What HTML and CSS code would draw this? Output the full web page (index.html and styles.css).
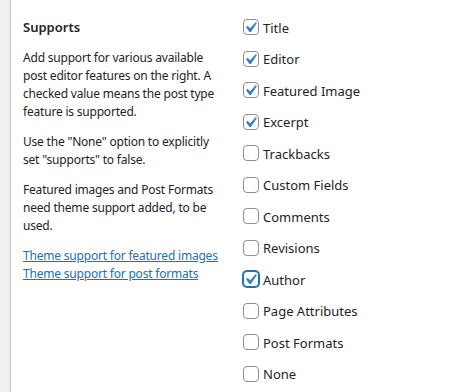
FILE: index.html
```html
<!DOCTYPE html>
<html>
<head>
<meta charset="utf-8">
<link rel="stylesheet" href="styles.css">
</head>
<body>
<div class="page">
  <div class="panel">
    <div class="info">
      <h3 class="title">Supports</h3>
      <p class="desc">Add support for various available post editor features on the right. A checked value means the post type feature is supported.</p>
      <p class="desc">Use the "None" option to explicitly set "supports" to false.</p>
      <p class="desc">Featured images and Post Formats need theme support added, to be used.</p>
      <p class="desc links"><a class="link" href="#">Theme support for featured images</a><br><a class="link" href="#">Theme support for post formats</a></p>
    </div>
    <div class="options">
      <label class="opt"><span class="box"><svg class="check" viewBox="0 0 20 20"><path d="M14.83 4.89l1.34.94-5.81 8.38H9.02L5.78 9.67l1.34-1.25 2.57 2.4z"/></svg></span>Title</label>
      <label class="opt"><span class="box"><svg class="check" viewBox="0 0 20 20"><path d="M14.83 4.89l1.34.94-5.81 8.38H9.02L5.78 9.67l1.34-1.25 2.57 2.4z"/></svg></span>Editor</label>
      <label class="opt"><span class="box"><svg class="check" viewBox="0 0 20 20"><path d="M14.83 4.89l1.34.94-5.81 8.38H9.02L5.78 9.67l1.34-1.25 2.57 2.4z"/></svg></span>Featured Image</label>
      <label class="opt"><span class="box"><svg class="check" viewBox="0 0 20 20"><path d="M14.83 4.89l1.34.94-5.81 8.38H9.02L5.78 9.67l1.34-1.25 2.57 2.4z"/></svg></span>Excerpt</label>
      <label class="opt"><span class="box"></span>Trackbacks</label>
      <label class="opt"><span class="box"></span>Custom Fields</label>
      <label class="opt"><span class="box"></span>Comments</label>
      <label class="opt"><span class="box"></span>Revisions</label>
      <label class="opt"><span class="box focus"><svg class="check" viewBox="0 0 20 20"><path d="M14.83 4.89l1.34.94-5.81 8.38H9.02L5.78 9.67l1.34-1.25 2.57 2.4z"/></svg></span>Author</label>
      <label class="opt"><span class="box"></span>Page Attributes</label>
      <label class="opt"><span class="box"></span>Post Formats</label>
      <label class="opt"><span class="box"></span>None</label>
    </div>
  </div>
</div>
</body>
</html>
```

FILE: styles.css
```css
html, body {
  margin: 0;
  padding: 0;
  background: #f0f0f1;
  font-family: "Noto Sans", "Open Sans", sans-serif;
  color: #1d2327;
}
.page {
  padding-left: 10px;
}
.panel {
  display: flex;
  background: #fff;
  border-left: 1px solid #c3c4c7;
  min-height: 392px;
  box-sizing: border-box;
}
.info {
  width: 200px;
  flex: none;
  padding: 0 20px 0 12px;
}
.title {
  margin: 17px 0 12px;
  font-size: 13px;
  line-height: 20px;
  font-weight: 600;
}
.desc {
  margin: 0 0 12px;
  font-size: 12px;
  line-height: 18px;
  letter-spacing: -0.2px;
}
.links {
  white-space: nowrap;
}
.link {
  color: #2271b1;
  text-decoration: underline;
}
.options {
  display: flex;
  flex-direction: column;
  padding-top: 12px;
}
.opt {
  display: flex;
  align-items: center;
  height: 31.5px;
  font-size: 13px;
}
.box {
  position: relative;
  width: 16px;
  height: 16px;
  box-sizing: border-box;
  border: 1px solid #8c8f94;
  border-radius: 4px;
  background: #fff;
  margin: -1px 4px 0 0;
  flex: none;
}
.box.focus {
  border-color: #2271b1;
  box-shadow: 0 0 0 1px #2271b1;
}
.check {
  position: absolute;
  width: 21px;
  height: 21px;
  left: -4px;
  top: -3px;
  fill: #3582c4;
}
```
